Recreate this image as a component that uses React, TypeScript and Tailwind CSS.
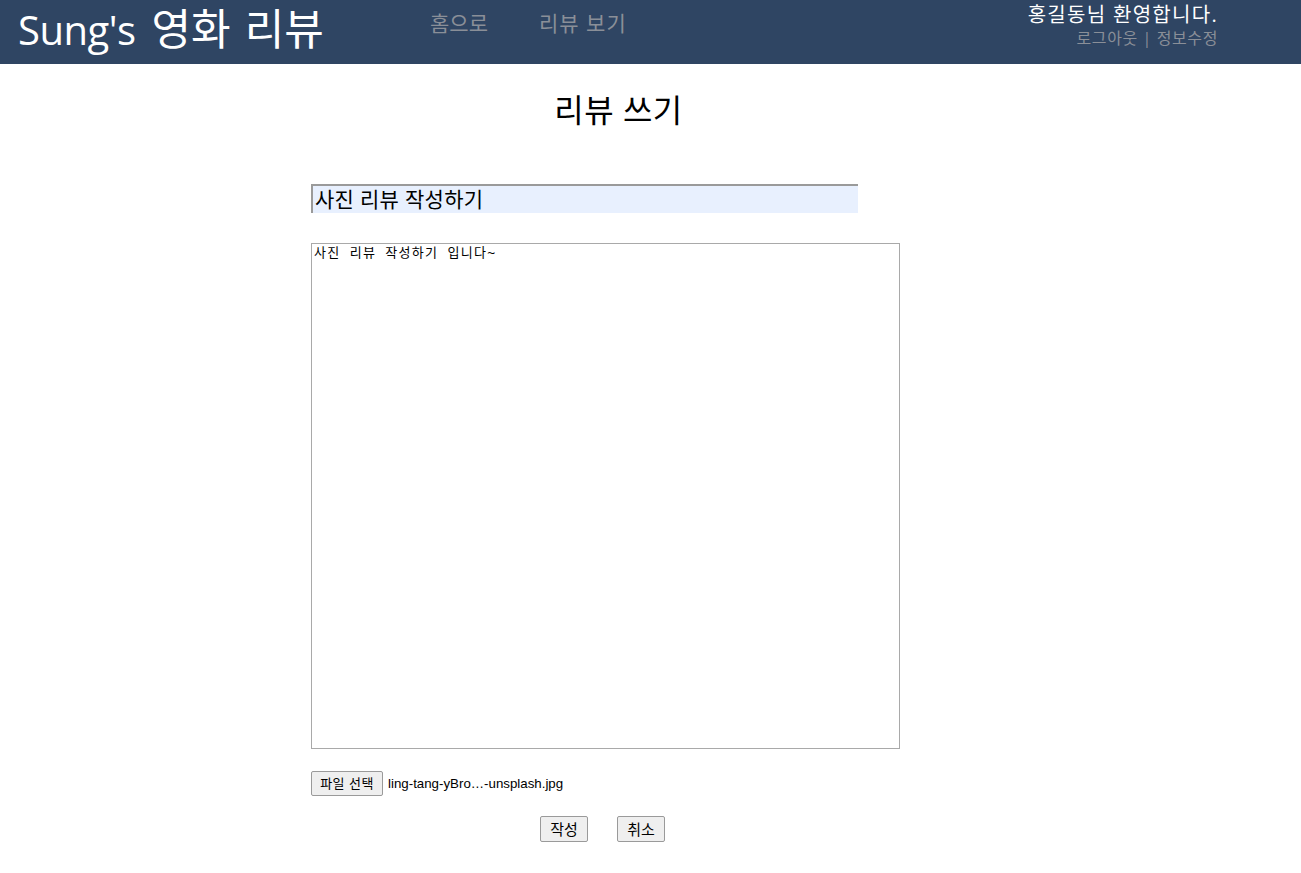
import React from "react";

const SANS = "font-['Open_Sans','Noto_Sans_CJK_KR',sans-serif]";

export default function App() {
  return (
    <div className={`min-h-[873px] bg-white ${SANS}`}>
      {/* Header */}
      <header className="h-16 bg-[#2f4563] flex items-start">
        <div className="ml-[18px] w-[412px] shrink-0">
          <a href="#" className="flex items-baseline text-white whitespace-nowrap">
            <span className="text-[40px] leading-[58px] tracking-[-0.5px]">Sung's</span>
            <span className="ml-[16px] text-[43px] leading-[58px]">영화</span>
            <span className="ml-[14px] text-[43px] leading-[58px]">리뷰</span>
          </a>
        </div>
        <nav className="mt-[8px] flex gap-[51px] text-[21px] leading-[30px] text-[#8a8f98]">
          <a href="#">홈으로</a>
          <a href="#" className="tracking-[1px]">리뷰 보기</a>
        </nav>
        <div className="ml-auto mr-[83px] mt-[1px] flex flex-col items-end">
          <span className="text-[20px] leading-[27px] text-white tracking-[1.3px]">홍길동님 환영합니다.</span>
          <span className="text-[16px] leading-[20px] text-[#8a8f98] tracking-[0.6px]">
            <a href="#">로그아웃</a> | <a href="#">정보수정</a>
          </span>
        </div>
      </header>

      {/* Form */}
      <main className="ml-[311px] w-[589px] flex flex-col">
        <h2 className="mt-[24px] pl-[26px] text-center text-[32px] leading-[44px] text-black tracking-[0.5px]">리뷰 쓰기</h2>
        <input
          defaultValue="사진 리뷰 작성하기"
          className="mt-[52px] w-[547px] h-[29px] bg-[#e8f0fe] border-t-2 border-l-2 border-[#9a9a9a] pl-[2px] text-[21px] tracking-[0.3px] text-black outline-none"
        />
        <textarea
          defaultValue="사진 리뷰 작성하기 입니다~"
          className="mt-[30px] w-[589px] h-[506px] border border-[#a9a9a9] px-[2px] py-[1px] text-[13px] leading-[16px] tracking-[1.3px] text-black resize-none outline-none font-['DejaVu_Sans_Mono','Noto_Sans_CJK_KR',monospace]"
        />
        <div className="mt-[22px] flex items-center gap-[5px]">
          <button className="h-[25px] w-[72px] bg-[#efefef] border border-[#9a9a9a] rounded-[2px] text-[13px] text-black tracking-[0.5px]">
            파일 선택
          </button>
          <span className="text-[13.3px] text-black font-['Liberation_Sans',sans-serif]">ling-tang-yBro…-unsplash.jpg</span>
        </div>
        <div className="mt-[20px] flex justify-center gap-[29px] pr-[6px]">
          <button className="h-[26px] w-[48px] bg-[#efefef] border border-[#9a9a9a] rounded-[2px] text-[15px] text-black">작성</button>
          <button className="h-[26px] w-[48px] bg-[#efefef] border border-[#9a9a9a] rounded-[2px] text-[15px] text-black">취소</button>
        </div>
      </main>
    </div>
  );
}
